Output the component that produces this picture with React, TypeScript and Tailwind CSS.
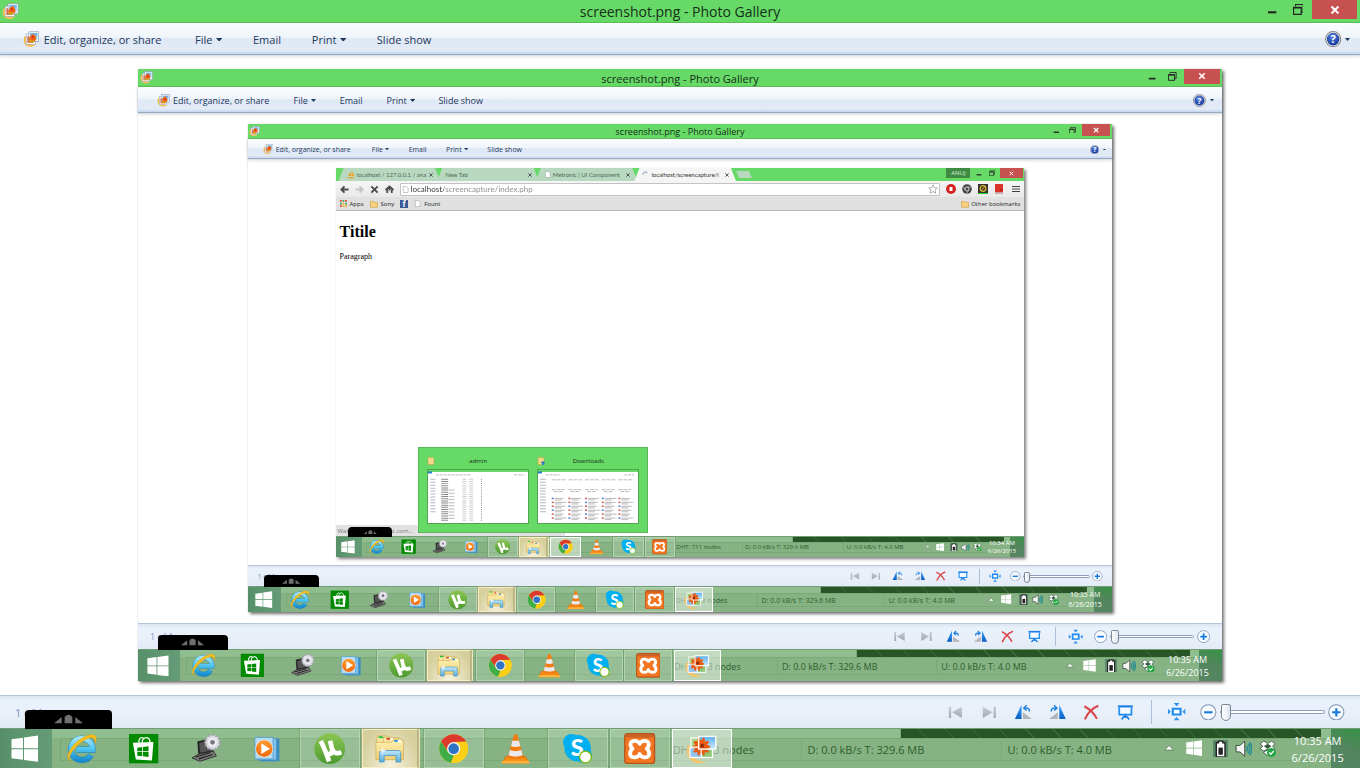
import type { ReactNode } from "react";

type Sizes = {
  text: string;
  title: string;
  titleBar: string;
  toolbar: string;
  controls: string;
  taskbar: string;
  photo: string;
  clock: string;
  thumb: string;
  track: string;
};

const LEVELS: Sizes[] = [
  {
    text: "text-[11px]",
    title: "text-[14px]",
    titleBar: "h-[23px]",
    toolbar: "h-8",
    controls: "h-[33px]",
    taskbar: "h-10",
    photo: "pt-[14px] pb-[14px]",
    clock: "text-[11px] leading-[17px]",
    thumb:
      "[&::-webkit-slider-thumb]:h-[17px] [&::-webkit-slider-thumb]:w-[10px] [&::-webkit-slider-thumb]:-mt-[7px]",
    track: "[&::-webkit-slider-runnable-track]:h-[4px]",
  },
  {
    text: "text-[9px]",
    title: "text-[11px]",
    titleBar: "h-[18px]",
    toolbar: "h-[26px]",
    controls: "h-[26px]",
    taskbar: "h-8",
    photo: "pt-[11px] pb-[11px]",
    clock: "text-[9px] leading-[13px]",
    thumb:
      "[&::-webkit-slider-thumb]:h-[14px] [&::-webkit-slider-thumb]:w-[8px] [&::-webkit-slider-thumb]:-mt-[6px]",
    track: "[&::-webkit-slider-runnable-track]:h-[3px]",
  },
  {
    text: "text-[7px]",
    title: "text-[9px]",
    titleBar: "h-[15px]",
    toolbar: "h-5",
    controls: "h-[21px]",
    taskbar: "h-[26px]",
    photo: "pt-[9px] pb-[8px]",
    clock: "text-[7px] leading-[10px]",
    thumb:
      "[&::-webkit-slider-thumb]:h-[11px] [&::-webkit-slider-thumb]:w-[6px] [&::-webkit-slider-thumb]:-mt-[4px]",
    track: "[&::-webkit-slider-runnable-track]:h-[3px]",
  },
];

/* ---------- shared gradients ---------- */

function Gradients() {
  return (
    <svg className="absolute h-0 w-0" aria-hidden="true">
      <defs>
        <linearGradient id="ie" x1="0" y1="0" x2="0" y2="1">
          <stop offset="0" stopColor="#9fe4fb" />
          <stop offset=".5" stopColor="#4cc3f2" />
          <stop offset="1" stopColor="#1a8fd0" />
        </linearGradient>
        <linearGradient id="green" x1="0" y1="0" x2="0" y2="1">
          <stop offset="0" stopColor="#8cc653" />
          <stop offset="1" stopColor="#4c9a2f" />
        </linearGradient>
        <linearGradient id="folder" x1="0" y1="0" x2="0" y2="1">
          <stop offset="0" stopColor="#fdf0b0" />
          <stop offset="1" stopColor="#efd074" />
        </linearGradient>
        <linearGradient id="glass" x1="0" y1="0" x2="0" y2="1">
          <stop offset="0" stopColor="#bfe6f8" />
          <stop offset="1" stopColor="#5aaede" />
        </linearGradient>
        <linearGradient id="orange" x1="0" y1="0" x2="0" y2="1">
          <stop offset="0" stopColor="#ff9a2e" />
          <stop offset="1" stopColor="#ec6a10" />
        </linearGradient>
        <linearGradient id="sky" x1="0" y1="0" x2="0" y2="1">
          <stop offset="0" stopColor="#5cb0f0" />
          <stop offset="1" stopColor="#c9e8fb" />
        </linearGradient>
        <linearGradient id="blue" x1="0" y1="0" x2="0" y2="1">
          <stop offset="0" stopColor="#3aa5ff" />
          <stop offset="1" stopColor="#0a5fc4" />
        </linearGradient>
        <linearGradient id="steel" x1="0" y1="0" x2="0" y2="1">
          <stop offset="0" stopColor="#c8ccd4" />
          <stop offset="1" stopColor="#a2a7b0" />
        </linearGradient>
        <radialGradient id="help" cx=".45" cy=".3" r=".75">
          <stop offset="0" stopColor="#5b86e0" />
          <stop offset="1" stopColor="#0c2f96" />
        </radialGradient>
      </defs>
    </svg>
  );
}

/* ---------- icons ---------- */

function Icon({ box = "0 0 32 32", className = "w-full", children }: { box?: string; className?: string; children: ReactNode }) {
  return (
    <svg viewBox={box} className={className} aria-hidden="true">
      {children}
    </svg>
  );
}

function GalleryIcon({ className }: { className: string }) {
  return (
    <Icon box="0 0 16 16" className={className}>
      <path d="M1.400 5C-.8 10.500 2 16 8 15.400c1.800-.1 3.400-.9 4.400-2.200-4 1.500-8-.8-8.400-7.200z" fill="#f8bf4f" />
      <rect x="3" y="3" width="9" height="10" fill="#fff" stroke="#9aa7b5" strokeWidth=".7" />
      <rect x="4.300" y="5" width="6" height="6.500" fill="#e2502a" />
      <rect x="5.800" y=".8" width="9.600" height="9.600" fill="#fff" stroke="#8a9bb0" strokeWidth=".7" />
      <rect x="7" y="2" width="7.200" height="7.200" fill="url(#sky)" />
      <path d="M6 9.500c-.4-2 .3-3.500 1.600-5C9 2.700 11 2.700 12 4.500c1.300 1.600 1.200 4-.2 5.500z" fill="#f0641a" />
      <path d="M5.500 11l2-3 1.200 1.800 1.500-1.500.6 3z" fill="#c9a512" />
      <path d="M8.500 5.500l1.500-1 .8 2.200-1.600 1z" fill="#d92f10" />
    </Icon>
  );
}

function WindowsLogo({ className = "w-full" }: { className?: string }) {
  return (
    <Icon box="0 0 28 28" className={className}>
      <path d="M.5 4.300l11.700-1.600v10.700H.5zM13.200 2.500L27.500.6v12.800H13.200zM.5 14.500h11.700v10.700L.5 23.600zM13.200 14.500h14.300v12.800l-14.300-1.900z" fill="#fff" />
    </Icon>
  );
}

function ExplorerE() {
  return (
    <Icon>
      <path d="M25.500 22.500A11 11 0 1 1 27.200 17H10.500" fill="none" stroke="#1b7fb8" strokeWidth="6.200" />
      <path d="M25.500 22.500A11 11 0 1 1 27.200 17H10.500" fill="none" stroke="url(#ie)" strokeWidth="5.200" />
      <path d="M4.500 29.500C-1.500 25 4 14.500 13 7.500 21 1.300 29.500-.2 30.800 4.300c.5 1.800 0 4-1.300 6.500.4-2.500.3-4.200-.8-5C25.500 3 18 7 12 12.500 5 19 1.500 26 4.500 29.500z" fill="#fbbf1c" stroke="#e09a0c" strokeWidth=".4" />
    </Icon>
  );
}

function StoreIcon() {
  return (
    <Icon>
      <rect x="1" y="1" width="30" height="30" fill="#008a00" />
      <path d="M11 10c0-6 4-6.500 5.500-3.500M14.500 10c0-7 8-7 8 0" fill="none" stroke="#fff" strokeWidth="1.300" />
      <path d="M5 10l21-.8L24.500 28 8 27z" fill="#fff" />
      <path d="M9.500 15l5-.6v4.300h-5zM15.300 14.300l5.700-.7v5.100h-5.700zM9.500 19.500h5v4.200l-5-.4zM15.300 19.500H21v5l-5.700-.6z" fill="#008a00" />
    </Icon>
  );
}

function LaptopIcon() {
  return (
    <Icon>
      <path d="M8 9l12-2.500 4 12.500-15 3z" fill="#2a2a2a" stroke="#111" strokeWidth=".8" />
      <path d="M9.500 10.300l9.500-2 3 9.500-11.500 2.300z" fill="#555" />
      <path d="M9 21.500l15-3 3 5-17 5.500-8-3.500z" fill="#777" stroke="#222" strokeWidth=".8" />
      <path d="M6 24.500l15-4.500M9 26.500l14-4.500" stroke="#222" strokeWidth="1.200" />
      <circle cx="23" cy="9.500" r="7.500" fill="#e4e4ea" stroke="#a2a2ac" strokeWidth="2" strokeDasharray="2.200 1.600" />
      <circle cx="23" cy="9.500" r="5.600" fill="#ececf0" stroke="#c0c0ca" strokeWidth=".6" />
      <circle cx="23" cy="9.500" r="2.400" fill="#777781" />
    </Icon>
  );
}

function MediaPlayerIcon() {
  return (
    <Icon>
      <path d="M8 6h20v23H8z" fill="#3c8cc4" />
      <path d="M6 5.500h19v22H6z" fill="#85c4ea" stroke="#3f8fc6" strokeWidth=".7" />
      <path d="M3 4.500h18.500v22H3z" fill="#b5dcf4" stroke="#4b9acb" strokeWidth=".8" />
      <circle cx="12.500" cy="16" r="9" fill="#fff" />
      <circle cx="12.500" cy="16" r="8.600" fill="url(#orange)" />
      <path d="M9.500 10.500v11l8.800-5.500z" fill="#fff" />
    </Icon>
  );
}

function TorrentIcon() {
  return (
    <Icon>
      <circle cx="16" cy="16" r="15.700" fill="url(#green)" />
      <path d="M7 8l5 11.500c1.800 3.500 7.500 2.500 6.500-2.500L16.500 8M18.500 16c1.500 5 5 5.500 9.500 3.500M12 19.500l3.500 9.500" fill="none" stroke="#fff" strokeWidth="4.800" strokeLinejoin="round" />
    </Icon>
  );
}

function FolderStackIcon() {
  return (
    <Icon>
      <path d="M2 5l1-3h9l1 2h13v20H2z" fill="url(#folder)" stroke="#c9a448" strokeWidth=".7" />
      <path d="M4 2.500h5v2H4z" fill="#1fbf3a" />
      <path d="M9 7l1-3.500h9l1 2h9V26H9z" fill="url(#folder)" stroke="#c9a448" strokeWidth=".7" />
      <path d="M12.500 4.300h4v2h-4z" fill="#d8432b" />
      <path d="M16.500 4.300h3v2h-3z" fill="#fff" />
      <path d="M1 9h17l1.500-2H31v21H1z" fill="url(#folder)" stroke="#c9a448" strokeWidth=".7" />
      <path d="M21 6.500h4v2h-4z" fill="#2f8fe0" />
      <path d="M25 6.500h4v2h-4z" fill="#fff" />
      <path d="M5 30.500V20.500a2.500 2.500 0 0 1 2.500-2.500h18a2.500 2.500 0 0 1 2.500 2.500v10h-5v-7H10v7z" fill="url(#glass)" stroke="#3b8fc0" strokeWidth=".8" />
      <path d="M8.500 13l.7 4 3 1.200-3 1-.7 4-.7-4-3-1 3-1.200z" fill="#fff" opacity=".85" />
    </Icon>
  );
}

function ChromeIcon() {
  return (
    <Icon>
      <circle cx="16" cy="16" r="14.800" fill="#fbcf16" />
      <path d="M3.200 8.600A14.800 14.800 0 0 1 28.800 8.800L16 9.200 10.200 19z" fill="#dc3a2c" />
      <path d="M3.200 8.600l6.800 10.700 6 3.600-2.900 7.600A14.800 14.800 0 0 1 3.200 8.600z" fill="#3fae49" />
      <circle cx="16" cy="16" r="6.800" fill="#f3f3f3" />
      <circle cx="16" cy="16" r="5.400" fill="#2f74c4" />
    </Icon>
  );
}

function ConeIcon() {
  return (
    <Icon>
      <path d="M6 24h20l3.500 6.500h-27z" fill="#f78c14" stroke="#d96c00" strokeWidth=".8" />
      <path d="M14.300 1.500h3.400L24 25c-3 2.500-13 2.500-16 0z" fill="#f07c12" />
      <path d="M12.600 8h6.800l1.300 5.200c-2.600 1.400-6.800 1.400-9.400 0zM10.200 17.500c3.600 1.500 8 1.500 11.600 0l1.300 5c-4 2-10.200 2-14.200 0z" fill="#e9e9ee" />
      <path d="M2.500 28.500h27l.8 2.800H1.700z" fill="#ffb03a" />
    </Icon>
  );
}

function SkypeIcon() {
  return (
    <Icon>
      <circle cx="9.500" cy="9.500" r="8.500" fill="#00aff0" />
      <circle cx="22" cy="22" r="8.500" fill="#00aff0" />
      <circle cx="16" cy="15.500" r="13.500" fill="#00aff0" />
      <text x="15.500" y="24" textAnchor="middle" fontFamily="Lato, Open Sans, sans-serif" fontSize="24" fontWeight="900" fill="#fff">S</text>
      <circle cx="24" cy="24.500" r="6" fill="#fff" stroke="#7db800" strokeWidth="1.300" />
    </Icon>
  );
}

function XamppIcon() {
  return (
    <Icon>
      <rect x=".8" y=".8" width="30.400" height="30.400" rx="2.500" fill="#f37623" stroke="#b5541a" strokeWidth="1.400" />
      <path d="M2 3a1.500 1.500 0 0 1 1.500-1.500h25A1.500 1.500 0 0 1 30 3v1.500H2z" fill="#c9622a" />
      <path
        d="M16 11C14.500 7.300 8 6.800 6.800 10.500c-.6 2.500.2 4 2 5.500-2.200 1.800-3.200 4.300-2.200 6.800 1.500 3.200 8 3 9.400-1.300 1.400 4.300 7.900 4.500 9.400 1.300 1-2.500 0-5-2.200-6.800 1.800-1.500 2.600-3 2-5.500C24 6.800 17.500 7.300 16 11z"
        fill="none"
        stroke="#fff"
        strokeWidth="3.800"
        strokeLinejoin="round"
      />
    </Icon>
  );
}

function PhotosIcon() {
  return (
    <Icon>
      <path d="M2 12C-2 22 4 31 14 31c3 0 5-.7 6.500-2C12 30 4.500 25 5 14z" fill="#f5c56b" />
      <rect x="5" y="5" width="14" height="10" fill="#a9d88e" stroke="#fff" strokeWidth="1.200" />
      <rect x="13" y="14" width="14" height="11" fill="#8ec878" stroke="#fff" strokeWidth="1.200" />
      <rect x="4" y="15" width="12" height="10" fill="#8fc3ec" stroke="#fff" strokeWidth="1.200" />
      <rect x="13" y="4" width="17" height="12" fill="url(#sky)" />
      <g fill="#ea5a10">
        {[0, 36, 72, 108, 144].map((angle) => (
          <ellipse key={angle} cx="15.500" cy="14" rx="9.500" ry="2.600" transform={`rotate(${angle} 15.500 14)`} />
        ))}
      </g>
      <rect x="13" y="3.500" width="17.500" height="13" fill="none" stroke="#fff" strokeWidth="1.400" />
      <path d="M6 14.500h7M15.500 17v6" stroke="#fff" strokeWidth="1.200" />
      <circle cx="16.500" cy="13" r="2" fill="#8a2a06" />
    </Icon>
  );
}

function Caret({ className = "w-[7px]" }: { className?: string }) {
  return (
    <Icon box="0 0 7 4" className={className}>
      <path d="M0 0h7L3.500 4z" fill="#1e395b" />
    </Icon>
  );
}

/* ---------- window chrome ---------- */

function MinimizeGlyph() {
  return (
    <Icon box="0 0 10 10">
      <path d="M1 7h8v2H1z" fill="#222" />
    </Icon>
  );
}

function RestoreGlyph() {
  return (
    <Icon box="0 0 10 10">
      <path d="M2.300 2V.5h7v7H8" fill="none" stroke="#222" />
      <path d="M.5 3h7v6.500h-7zM.5 3.600h7" fill="none" stroke="#222" strokeWidth="1.100" />
    </Icon>
  );
}

function CloseGlyph() {
  return (
    <Icon box="0 0 10 10">
      <path d="M1.500 1.500l7 7M8.500 1.500l-7 7" stroke="#fff" strokeWidth="2" />
    </Icon>
  );
}

function TitleBar({ s }: { s: Sizes }) {
  return (
    <header className={`grid shrink-0 grid-cols-[1fr_auto_1fr] items-center border-b border-[#5bc455] bg-[#67d966] ${s.titleBar}`}>
      <GalleryIcon className="ml-[0.4%] h-[76%] justify-self-start" />
      <h2 className={`pt-px leading-none text-[#14301a] ${s.title}`}>screenshot.png - Photo Gallery</h2>
      <div className="flex h-full items-start justify-end pr-[0.5%]">
        <button aria-label="Minimize" className="mt-[0.7%] mr-[2.600%] w-[1.800%]"><MinimizeGlyph /></button>
        <button aria-label="Restore" className="mt-[0.7%] mr-[1.500%] w-[1.900%]"><RestoreGlyph /></button>
        <button aria-label="Close" className="flex h-[86%] w-[7.800%] items-center justify-center bg-[#c75050]">
          <span className="w-[22%]"><CloseGlyph /></span>
        </button>
      </div>
    </header>
  );
}

function Toolbar({ s }: { s: Sizes }) {
  return (
    <nav
      className={`relative grid shrink-0 grid-cols-[12.950%_4.370%_4.430%_4.900%_1fr_auto] items-center border-b border-[#98abc5] bg-[linear-gradient(to_bottom,#fbfdff_0%,#eff5fb_45%,#dfe8f5_52%,#e2eaf6_88%,#c3d6ee_100%)] pt-0.5 pl-[1.700%] pr-[0.700%] leading-none text-[#1e395b] shadow-[0_1px_3px_rgba(80,90,110,0.3)] ${s.toolbar} ${s.text}`}
    >
      <button className="flex items-center gap-[2.500%] whitespace-nowrap">
        <GalleryIcon className="w-[9.500%] shrink-0" />
        Edit, organize, or share
      </button>
      <button className="flex items-center gap-[7%] text-left">File <Caret className="w-[11%]" /></button>
      <button className="text-left">Email</button>
      <button className="flex items-center gap-[6%] text-left">Print <Caret className="w-[10%]" /></button>
      <button className="justify-self-start">Slide show</button>
      <button aria-label="Help" className="flex h-full items-center gap-1">
        <Icon box="0 0 16 16" className="h-[56%]">
          <circle cx="8" cy="8" r="7.500" fill="#e8e8e8" stroke="#858585" />
          <circle cx="8" cy="8" r="6.200" fill="url(#help)" />
          <text x="8" y="12" textAnchor="middle" fontSize="11" fontWeight="700" fill="#fff" fontFamily="Open Sans, sans-serif">?</text>
        </Icon>
        <Icon box="0 0 7 4" className="h-[10%]">
          <path d="M0 0h7L3.500 4z" fill="#1e395b" />
        </Icon>
      </button>
    </nav>
  );
}

const PLAYBACK: { label: string; art: ReactNode }[] = [
  {
    label: "Previous",
    art: <path d="M3 4h2.500v12H3zM17 4v12L6.500 10z" fill="url(#steel)" />,
  },
  {
    label: "Next",
    art: <path d="M14.500 4H17v12h-2.500zM3 4v12l10.500-6z" fill="url(#steel)" />,
  },
  {
    label: "Rotate counterclockwise",
    art: (
      <>
        <path d="M8 2v15H1z" fill="url(#blue)" />
        <path d="M9.500 10v7H19z" fill="#b3b3b8" />
        <path d="M11 5.500h3c2 0 2.500 1 2.500 3.500M13.500 2.500l-3 3 3 2.500" fill="none" stroke="#1c7fe0" strokeWidth="1.500" />
      </>
    ),
  },
  {
    label: "Rotate clockwise",
    art: (
      <>
        <path d="M12 2v15h7z" fill="url(#blue)" />
        <path d="M10.500 10v7H1z" fill="#b3b3b8" />
        <path d="M9 5.500H6C4 5.500 3.500 6.500 3.500 9M6.500 2.500l3 3-3 2.500" fill="none" stroke="#1c7fe0" strokeWidth="1.500" />
      </>
    ),
  },
  {
    label: "Delete",
    art: <path d="M2.500 3.500C8 6.500 13 11 16 17M17.500 3C12 5 6 11 3 17.500" fill="none" stroke="#d9474a" strokeWidth="2.200" />,
  },
  {
    label: "Play slide show",
    art: (
      <>
        <path d="M2 2.500h16v2.500H2z" fill="#1d7fe6" />
        <path d="M3.500 5v7.500h13V5" fill="#f4faff" stroke="#1d8cf0" strokeWidth="1.800" />
        <path d="M10 12.500V16M6 17.500l2.500-3h3l2.500 3" fill="none" stroke="#1d7fe6" strokeWidth="1.800" />
      </>
    ),
  },
];

function ZoomButton({ label, plus }: { label: string; plus?: boolean }) {
  return (
    <button aria-label={label} className="w-[1.250%]">
      <Icon box="0 0 16 16">
        <circle cx="8" cy="8" r="7.300" fill="#f7fbff" stroke="#8194b4" />
        <path d={plus ? "M4 8h8M8 4v8" : "M4 8h8"} stroke="#1279dd" strokeWidth="2" />
      </Icon>
    </button>
  );
}

function Controls({ s }: { s: Sizes }) {
  return (
    <div
      className={`flex shrink-0 items-center border-t border-[#b4c4da] bg-[linear-gradient(to_bottom,#dbe5f1_0%,#e9f1fa_15%,#e9f0f9_50%,#e3ebf6_100%)] pr-[1.100%] pl-[1.100%] leading-none ${s.controls} ${s.text}`}
    >
      <span className="mr-auto text-[#8390c4]">1 of 1</span>
      {PLAYBACK.map((item) => (
        <button key={item.label} aria-label={item.label} className="flex w-[2.560%] justify-center">
          <Icon box="0 0 20 20" className="w-[55%]">{item.art}</Icon>
        </button>
      ))}
      <span className="mr-[1.150%] ml-[0.600%] h-3/4 w-px bg-[#aebed4]" />
      <button aria-label="Fit to window" className="mr-[1.050%] w-[1.450%]">
        <Icon box="0 0 20 20">
          <path d="M6 7h8v6H6z" fill="#fff" stroke="#1d8cf0" strokeWidth="2.200" />
          <path d="M7 1h6l-3 3.500zM7 19h6l-3-3.500zM1 7v6l3-3zM19 7v6l-3-3z" fill="#2b92f2" />
        </Icon>
      </button>
      <ZoomButton label="Zoom out" />
      <input
        type="range"
        aria-label="Zoom"
        min="0"
        max="100"
        defaultValue="0"
        className={`mx-[0.250%] w-[7.900%] appearance-none bg-transparent [&::-webkit-slider-runnable-track]:rounded-full [&::-webkit-slider-runnable-track]:border [&::-webkit-slider-runnable-track]:border-[#8d9dbb] [&::-webkit-slider-runnable-track]:bg-white [&::-webkit-slider-thumb]:appearance-none [&::-webkit-slider-thumb]:rounded-t-[2px] [&::-webkit-slider-thumb]:rounded-b-[5px] [&::-webkit-slider-thumb]:border [&::-webkit-slider-thumb]:border-[#7e8798] [&::-webkit-slider-thumb]:bg-[linear-gradient(to_right,#ffffff,#dfe5ee)] ${s.thumb} ${s.track}`}
      />
      <ZoomButton label="Zoom in" plus />
    </div>
  );
}

/* ---------- taskbar ---------- */

type AppEntry = { name: string; art: ReactNode; state: "pinned" | "running" | "stack" };

const APPS: AppEntry[] = [
  { name: "Internet Explorer", art: <ExplorerE />, state: "pinned" },
  { name: "Store", art: <StoreIcon />, state: "pinned" },
  { name: "Device settings", art: <LaptopIcon />, state: "pinned" },
  { name: "Media Player", art: <MediaPlayerIcon />, state: "pinned" },
  { name: "Torrent", art: <TorrentIcon />, state: "running" },
  { name: "File Explorer", art: <FolderStackIcon />, state: "stack" },
  { name: "Chrome", art: <ChromeIcon />, state: "running" },
  { name: "VLC", art: <ConeIcon />, state: "pinned" },
  { name: "Skype", art: <SkypeIcon />, state: "running" },
  { name: "XAMPP", art: <XamppIcon />, state: "running" },
  { name: "Photo Gallery", art: <PhotosIcon />, state: "running" },
];

const STATE_STYLE = {
  pinned: "border-transparent",
  running: "border-[#b5d3b3] bg-white/15 outline outline-[#6c9a6b]/60",
  stack: "mr-[6%] border-[#f4efc8] border-r-[#b9b487] bg-[radial-gradient(ellipse_at_bottom,#f7f1de,#d6cf9c_80%)] shadow-[2px_0_0_#ece5b8] outline outline-[#a9a878]/70",
  active: "border-white bg-white/45",
};

function TaskButton({ app, active }: { app: AppEntry; active: boolean }) {
  return (
    <button
      aria-label={app.name}
      className={`flex min-w-0 flex-1 items-center justify-center border ${active ? STATE_STYLE.active : STATE_STYLE[app.state]}`}
    >
      <span className="w-[54%]">{app.art}</span>
    </button>
  );
}

function DeskBand({ nodes }: { nodes: string }) {
  return (
    <div className="absolute inset-0 flex flex-col text-[#2b5f2b]">
      <div className="flex h-[23%] bg-[#90be8f]">
        <div className="ml-[66.200%] w-[30.900%] border-l border-[#7da87c] bg-[#275526] bg-[repeating-linear-gradient(45deg,transparent_0,transparent_18px,#3d6a3b_18px,#3d6a3b_19px)]" />
      </div>
      <div className="ml-[4.400%] flex h-[58%] items-center border-y border-l border-[#7aa978] leading-none whitespace-nowrap">
        <span className="ml-[47.100%] w-[9.900%]">DHT: {nodes} nodes</span>
        <span className="flex h-[90%] w-[15.400%] items-center border-l border-[#7aa978] pl-[0.400%]">D: 0.0 kB/s T: 329.6 MB</span>
        <span className="flex h-[90%] items-center border-l border-[#7aa978] pl-[0.400%]">U: 0.0 kB/s T: 4.0 MB</span>
      </div>
    </div>
  );
}

function Tray({ time, clock }: { time: string; clock: string }) {
  return (
    <div className="relative ml-auto flex w-[15%] items-center">
      <button aria-label="Show hidden icons" className="ml-[4%] w-[5%]">
        <Icon box="0 0 10 6">
          <path d="M.5 5L5 .5 9.500 5z" fill="#fff" stroke="#5a7a5a" strokeWidth=".8" />
        </Icon>
      </button>
      <span className="ml-[5.500%] w-[8%]"><WindowsLogo /></span>
      <span className="ml-[5.500%] w-[7.500%]">
        <Icon box="0 0 14 16">
          <rect width="14" height="16" fill="#3b6a58" opacity=".6" />
          <path d="M3 2.500h2V1h4v1.500h2v13H3z" fill="#fff" stroke="#222" strokeWidth="1.300" />
          <path d="M5 7h4v6.500H5z" fill="#222" />
        </Icon>
      </span>
      <span className="ml-[3%] w-[8.500%]">
        <Icon box="0 0 16 16">
          <path d="M1 5h3.500L9 1v14l-4.500-4H1z" fill="#f4f4f4" stroke="#3b4a42" strokeWidth=".9" />
          <path d="M10.500 5.500q2 2.500 0 5M12 3.500q3.400 4.500 0 9M13.500 2q4.500 6 0 12" fill="none" stroke="#2a8f90" strokeWidth="1.500" />
        </Icon>
      </span>
      <span className="ml-[3.500%] w-[8.500%]">
        <Icon box="0 0 16 16">
          <path d="M4.500 1L8 3.300 11.500 1 15 3.500l-2.500 2.200L15 8l-3.500 2.300L8 8l-3.500 2.300L1 8l2.500-2.300L1 3.500zM4 11.500L8 9l4 2.500L8 14.500z" fill="#fff" stroke="#37593f" strokeWidth=".8" />
          <path d="M8 3.500l3.500 2.200L8 8 4.500 5.700z" fill="#37593f" />
          <circle cx="11.500" cy="11.500" r="4.200" fill="#27a744" />
          <path d="M9.500 11.500l1.500 1.600 2.600-3" fill="none" stroke="#fff" strokeWidth="1.200" />
        </Icon>
      </span>
      <time className={`ml-auto mr-[8%] text-center whitespace-nowrap text-white ${clock}`}>
        <span className="block">{time}</span>
        <span className="block">6/26/2015</span>
      </time>
    </div>
  );
}

function PullTab() {
  return (
    <button
      aria-label="Open panel"
      className="absolute bottom-full left-[1.850%] z-10 flex h-[50%] w-[6.400%] items-center justify-center rounded-t-[4px] bg-black"
    >
      <Icon box="0 0 30 10" className="w-1/3">
        <path d="M0 9.500L8 3v6.500zM22 3v6.500h8zM11 9.500V3q4-4.500 8 0v6.500z" fill="#6f6f6f" />
      </Icon>
    </button>
  );
}

function Taskbar({ height, text, clock, time, nodes, active, apps }: { height: string; text: string; clock: string; time: string; nodes: string; active: string; apps: AppEntry[] }) {
  return (
    <footer className={`relative flex shrink-0 border-t border-[#739d76] bg-[#87b384] ${height} ${text}`}>
      <DeskBand nodes={nodes} />
      <div className="absolute inset-y-0 right-0 w-[2.100%] bg-[linear-gradient(200deg,#369244_0%,#488a54_28%,#53855f_50%,#558662_100%)]" />
      <PullTab />
      <button aria-label="Start" className="relative flex w-[3.820%] items-center bg-[linear-gradient(to_right,#579068,#659c78)]">
        <span className="ml-[22%] w-[53%]"><WindowsLogo /></span>
      </button>
      <div className="relative grid w-[50%] auto-cols-fr grid-flow-col grid-cols-11 gap-[0.300%]">
        {apps.map((app) => (
          <div key={app.name} className="flex min-w-0">
            <TaskButton app={app} active={app.name === active} />
          </div>
        ))}
      </div>
      <Tray time={time} clock={clock} />
    </footer>
  );
}

/* ---------- browser ---------- */

function PageIcon() {
  return (
    <Icon box="0 0 8 8" className="w-[7px] shrink-0">
      <path d="M1.500.5h3.500L7 2.500v5H1.500z" fill="#fff" stroke="#999" strokeWidth=".6" />
    </Icon>
  );
}

function FolderIcon() {
  return (
    <Icon box="0 0 8 8" className="w-2 shrink-0">
      <path d="M.5 1.500h3l.6.8h3.400v5h-7z" fill="#f8d27c" stroke="#cf9a3c" strokeWidth=".6" />
    </Icon>
  );
}

function Tab({ title, icon, active }: { title: string; icon?: ReactNode; active?: boolean }) {
  return (
    <button
      className={`-ml-[3px] flex w-[16.800%] shrink-0 items-center gap-[2px] pr-[7px] pl-2 [clip-path:polygon(5%_0,95%_0,100%_100%,0_100%)] ${active ? "bg-[#f4f5f4] text-[#333]" : "bg-[#b8d9c0] text-[#4e6655]"}`}
    >
      {icon}
      <span className="flex-1 text-left whitespace-nowrap">{title}</span>
      <Icon box="0 0 6 6" className="w-1 shrink-0">
        <path d="M.5.5l5 5M5.500.5l-5 5" stroke="#444" strokeWidth="1.300" />
      </Icon>
    </button>
  );
}

const NAV_ICONS: { label: string; path: string; color: string }[] = [
  { label: "Back", path: "M9.500 5h-8M5 1.500L1.500 5 5 8.500", color: "#4a4a4a" },
  { label: "Forward", path: "M.5 5h8M5 1.500L8.500 5 5 8.500", color: "#c4c4c4" },
  { label: "Stop", path: "M1.500 1.500l7 7M8.500 1.500l-7 7", color: "#4a4a4a" },
  { label: "Home", path: "M.5 5.500L5 1.500l4.500 4M2.500 5v4M7.500 5v4M5 3v3", color: "#4a4a4a" },
];

function AddressRow() {
  return (
    <div className="flex h-4 shrink-0 items-center gap-[6px] bg-[linear-gradient(to_bottom,#f4f5f4,#e9e9e9)] pr-1 pl-1">
      {NAV_ICONS.map((icon) => (
        <button key={icon.label} aria-label={icon.label} className="w-[9px]">
          <Icon box="0 0 10 10">
            <path d={icon.path} fill="none" stroke={icon.color} strokeWidth="2" />
          </Icon>
        </button>
      ))}
      <div className="flex h-[13px] min-w-0 flex-1 items-center gap-[2px] rounded-[1px] border border-[#c3c3c3] bg-white px-px">
        <PageIcon />
        <input
          aria-label="Address"
          defaultValue="localhost/screencapture/index.php"
          className="min-w-0 flex-1 bg-[linear-gradient(to_right,#333_33px,#8a8a8a_33px)] bg-clip-text font-[Lato,sans-serif] text-[8px] leading-none text-transparent outline-none"
        />
        <Icon box="0 0 10 10" className="w-[10px]">
          <path d="M5 .8l1.300 2.900 3 .3L7 6.100l.7 3.100L5 7.600 2.300 9.200 3 6.100.7 4l3-.3z" fill="#fff" stroke="#999" strokeWidth=".8" />
        </Icon>
      </div>
      <Icon box="0 0 10 10" className="w-[10px]">
        <circle cx="5" cy="5" r="5" fill="#d32222" />
        <path d="M3.500 3h3v4h-3z" fill="#fff" />
      </Icon>
      <Icon box="0 0 10 10" className="w-[10px]">
        <circle cx="5" cy="5" r="4.800" fill="#444" />
        <circle cx="5" cy="5" r="2" fill="#444" stroke="#ddd" strokeWidth=".9" />
        <path d="M5 3h4.300M3.200 6L1.200 2.500M6.800 6L4.500 9.600" stroke="#ddd" strokeWidth=".7" />
      </Icon>
      <Icon box="0 0 10 10" className="w-[10px]">
        <rect width="10" height="10" fill="#333" />
        <path d="M0 9h10v1H0z" fill="#21d021" />
        <circle cx="5" cy="4.500" r="2.800" fill="none" stroke="#e0b52a" strokeWidth="1.300" />
        <path d="M3 7l4-5" stroke="#e0b52a" />
      </Icon>
      <Icon box="0 0 10 10" className="w-[10px]">
        <path d="M1 0h8v8.500H1z" fill="#dc3328" />
        <path d="M1 8.500h8V10H1z" fill="#b9b2ac" />
        <path d="M6 6.500l1-2 1 2z" fill="#8c1e16" />
      </Icon>
      <button aria-label="Menu" className="ml-[2px] w-2">
        <Icon box="0 0 8 8">
          <path d="M0 1.500h8M0 4h8M0 6.500h8" stroke="#444" strokeWidth="1.200" />
        </Icon>
      </button>
    </div>
  );
}

function BookmarksRow() {
  return (
    <div className="flex h-[14px] shrink-0 items-center gap-[6px] border-b border-[#b9b9b9] bg-[#e0e0e0] px-1 text-[6px] leading-none text-[#222]">
      <a href="#apps" className="flex items-center gap-[3px]">
        <Icon box="0 0 8 8" className="w-[7px]">
          <path d="M0 0h2v2H0zM0 6h2v2H0zM6 0h2v2H6z" fill="#e04a3a" />
          <path d="M3 0h2v2H3zM6 3h2v2H6zM0 3h2v2H0z" fill="#3ca35a" />
          <path d="M3 3h2v2H3zM3 6h2v2H3zM6 6h2v2H6z" fill="#e9a92a" />
        </Icon>
        Apps
      </a>
      <a href="#sony" className="flex items-center gap-[3px]"><FolderIcon />Sony</a>
      <a href="#facebook" aria-label="Facebook" className="flex size-2 items-end justify-center bg-[#3b5998] text-[8px] leading-none font-bold text-white">f</a>
      <a href="#fount" className="flex items-center gap-[3px]"><PageIcon />Fount</a>
      <a href="#other" className="ml-auto flex items-center gap-[2px]"><FolderIcon />Other bookmarks</a>
    </div>
  );
}

function DetailsThumb() {
  return (
    <svg viewBox="0 0 102 54" className="w-full border border-[#4fa650] bg-white" aria-hidden="true">
      <path d="M0 0h102v2H0z" fill="#67d966" />
      <path d="M0 1.500h4v2H0z" fill="#1979ca" />
      <path d="M8 5h36M88 5h10" stroke="#b9b9b9" strokeDasharray="3 1" />
      <path d="M5 9v34" stroke="#b0b8c4" strokeWidth="5" strokeDasharray="1 2" />
      <path d="M17 9v44" stroke="#8a8a8a" strokeWidth="7" strokeDasharray="1 1.200" />
      <path d="M24 20v30" stroke="#bbb" strokeWidth="6" strokeDasharray="1 2.200" />
      <path d="M37 9v44M44 9v44" stroke="#ccc" strokeWidth="4" strokeDasharray="1 1.200" />
      <path d="M54.500 9v44" stroke="#888" strokeDasharray="1 1.200" />
    </svg>
  );
}

function TilesThumb() {
  return (
    <svg viewBox="0 0 102 54" className="w-full border border-[#4fa650] bg-white" aria-hidden="true">
      <path d="M0 0h102v2H0z" fill="#67d966" />
      <path d="M0 1.500h4v2H0z" fill="#1979ca" />
      <path d="M8 5h14M88 5h10" stroke="#b9b9b9" strokeDasharray="3 1" />
      <path d="M5 9v34" stroke="#b0b8c4" strokeWidth="6" strokeDasharray="1 2" />
      {[14, 31, 48, 65, 82].map((x, column) => (
        <g key={x}>
          <path d={`M${x} 10h14M${x} 20h13M${x + 2} 22h9`} stroke="#aaa" strokeWidth=".8" strokeDasharray="4 1" />
          {[29, 33, 37, 41, 45, 49].map((y, row) => (
            <g key={y}>
              <path d={`M${x} ${y}h2`} stroke={(row + column) % 3 ? "#c8584a" : "#4a78c8"} strokeWidth="1.500" />
              <path d={`M${x + 3} ${y}h${9 + ((row * 3 + column) % 4)}M${x + 3} ${y + 1.6}h7`} stroke="#999" strokeWidth=".7" />
            </g>
          ))}
        </g>
      ))}
    </svg>
  );
}

function WindowPreview({ title, children }: { title: string; children: ReactNode }) {
  return (
    <button className="flex min-w-0 flex-1 flex-col">
      <span className="flex h-4 w-full items-center text-[6px] leading-none text-[#123015]">
        <Icon box="0 0 8 8" className="w-2 shrink-0">
          <path d="M1 .5h4.500l1.500 1v6H1z" fill="#f3d98a" stroke="#c79c3c" strokeWidth=".5" />
          {title === "Downloads" && <path d="M4.500 5h3L6 8z" stroke="#2e78c8" fill="#2e78c8" />}
        </Icon>
        <span className="flex-1 pr-2 text-center">{title}</span>
      </span>
      {children}
    </button>
  );
}

function Browser() {
  return (
    <section className="relative flex aspect-[1360/768] min-h-0 min-w-0 flex-col bg-white shadow-[2px_2px_3px_rgba(0,0,0,0.5)]">
      <div className="flex h-[13px] shrink-0 bg-[#67d966] pl-[6px] text-[6px] leading-none">
        <div className="flex min-w-0 flex-1 font-[Lato,sans-serif]">
          <Tab
            title="localhost / 127.0.0.1 / ana"
            icon={
              <Icon box="0 0 8 8" className="w-2 shrink-0">
                <path d="M1 5Q3 1 4.500.5V5zM5 5V1q2 1.500 2.500 4zM.5 6h7L6.500 7.500h-5z" fill="#e8a734" />
              </Icon>
            }
          />
          <Tab title="New Tab" />
          <Tab title="Metronic | UI Component" icon={<PageIcon />} />
          <Tab
            title="localhost/screencapture/i"
            active
            icon={
              <Icon box="0 0 8 8" className="w-[7px] shrink-0">
                <path d="M1 4a3 3 0 0 1 5-2" fill="none" stroke="#6b7fb8" />
              </Icon>
            }
          />
          <button aria-label="New tab" className="mt-[3px] h-[7px] w-4 bg-[#b8d9c0] [clip-path:polygon(0_0,80%_0,100%_100%,20%_100%)]" />
        </div>
        <span className="flex h-[10px] w-6 items-center justify-center bg-[#3f8a43] text-[#d8f0d8]">ANUJ</span>
        <button aria-label="Minimize" className="mt-[2px] ml-[6px] size-[6px]"><MinimizeGlyph /></button>
        <button aria-label="Restore" className="mr-[5px] ml-[7px] mt-[2px] size-[6px]"><RestoreGlyph /></button>
        <button aria-label="Close" className="mr-px flex h-[10px] w-[23px] items-center justify-center bg-[#c75050]">
          <span className="w-[5px]"><CloseGlyph /></span>
        </button>
      </div>
      <AddressRow />
      <BookmarksRow />
      <main className="min-h-0 flex-1 px-1 pt-3 font-['Liberation_Serif',serif] text-black">
        <h1 className="text-[16px] leading-[18px] font-bold">Titile</h1>
        <p className="pt-[11px] text-[8px] leading-[10px]">Paragraph</p>
      </main>
      <div className="flex h-[11px] w-1/3 shrink-0 items-center bg-[#e2e2e2] px-[2px] text-[6px] leading-none text-[#777]">
        Waiting for localhost.com...
      </div>
      <Taskbar
        height="h-[21px]"
        text="text-[6px]"
        clock="text-[6px] leading-[8px]"
        time="10:34 AM"
        nodes="711"
        active="Chrome"
        apps={APPS.slice(0, 10)}
      />
      <div className="absolute bottom-[6.300%] left-[12%] z-20 flex w-[33.400%] gap-2 border border-[#58b857] bg-[#67d966] px-2 pt-[5px] pb-2">
        <WindowPreview title="admin"><DetailsThumb /></WindowPreview>
        <WindowPreview title="Downloads"><TilesThumb /></WindowPreview>
      </div>
    </section>
  );
}

/* ---------- gallery ---------- */

function Gallery({ level }: { level: number }) {
  const s = LEVELS[level];
  const frame =
    level === 0
      ? "h-screen"
      : "aspect-[1360/768] min-h-0 min-w-0 shadow-[2px_2px_3px_rgba(0,0,0,0.55),0_0_1px_rgba(0,0,0,0.2)]";
  return (
    <section className={`relative flex flex-col bg-white ${frame}`}>
      <TitleBar s={s} />
      <Toolbar s={s} />
      <div className={`flex min-h-0 flex-1 justify-center ${s.photo}`}>
        {level < LEVELS.length - 1 ? <Gallery level={level + 1} /> : <Browser />}
      </div>
      <Controls s={s} />
      <Taskbar
        height={s.taskbar}
        text={s.text}
        clock={s.clock}
        time="10:35 AM"
        nodes="713"
        active="Photo Gallery"
        apps={APPS}
      />
    </section>
  );
}

export default function App() {
  return (
    <div className="overflow-hidden bg-white font-['Open_Sans','Noto_Sans',sans-serif]">
      <Gradients />
      <Gallery level={0} />
    </div>
  );
}
